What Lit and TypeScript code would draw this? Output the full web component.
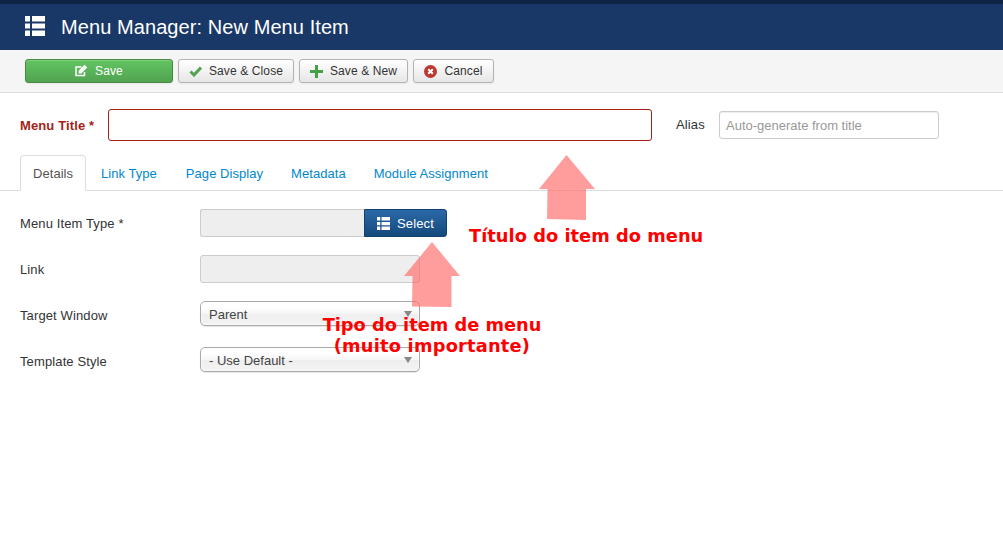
import { LitElement, html, css, svg } from "lit";
import { customElement } from "lit/decorators.js";

const listIcon = (size: number) => html`<svg width=${size} height=${size} viewBox="0 0 20 20" fill="currentColor"><path d="M0 0h5v5.500H0zM7 0h13v5.500H7zM0 7.500h5v5H0zM7 7.500h13v5H7zM0 14.500h5v5.500H0zM7 14.500h13v5.500H7z"/></svg>`;

@customElement("app-root")
export class AppRoot extends LitElement {
  static styles = css`
    :host { display: block; width: 1003px; height: 536px; position: relative; overflow: hidden; background: #fff;
      font-family: "Liberation Sans", Arial, sans-serif; font-size: 13px; color: #333; letter-spacing: .12px; }
    .topbar { height: 4px; background: #0f2344; }
    .header { height: 46px; background: #1a3867; display: flex; align-items: center; padding-left: 25px; gap: 16px; color: #fff; }
    .header h1 { margin: 0; font-size: 20px; font-weight: 400; line-height: 46px; letter-spacing: .08px; }
    .header svg { margin-top: -3px; }
    .toolbar { height: 43px; box-sizing: border-box; background: #f5f5f5; border-bottom: 1px solid #ddd; display: flex; gap: 5px; padding: 9px 0 0 25px; }
    .btn { height: 24px; box-sizing: border-box; border: 1px solid #b3b3b3; border-radius: 3px; background: linear-gradient(#fff, #e6e6e6); display: flex; align-items: center; justify-content: center; gap: 7px; font-size: 12px; color: #333; box-shadow: inset 0 1px 0 rgba(255,255,255,.2), 0 1px 2px rgba(0,0,0,.05); }
    .b-save { width: 148px; background: linear-gradient(#62c462, #51a351); border-color: #46893f; color: #fff; gap: 8px; }
    .b-close { width: 116px; }
    .b-new { width: 109px; }
    .b-cancel { width: 81px; }
    .title-row { display: flex; align-items: center; height: 32px; margin-top: 16px; padding-left: 20px; }
    .title-label { width: 88px; font-weight: 700; color: #a51f18; }
    .title-input { width: 544px; height: 32px; box-sizing: border-box; border: 1px solid #a51f18; border-radius: 3px; background: #fff; }
    .alias-label { margin-left: 24px; width: 43px; margin-top: -1px; }
    .alias-input { width: 220px; height: 28px; box-sizing: border-box; border: 1px solid #ccc; border-radius: 3px; color: #999; font-size: 13px; letter-spacing: 0; padding: 1px 0 0 6px; display: flex; align-items: center; box-shadow: inset 0 1px 1px rgba(0,0,0,.075); }
    .tabs { display: flex; height: 36px; box-sizing: border-box; margin-top: 14px; padding-left: 20px; border-bottom: 1px solid #ddd; letter-spacing: .05px; }
    .tab { height: 36px; box-sizing: border-box; line-height: 37px; color: #08c; font-size: 13px; padding: 0 14px; }
    .tab.active { color: #555; background: #fff; border: 1px solid #ddd; border-bottom-color: #fff; border-radius: 4px 4px 0 0; padding: 0 12px; line-height: 36px; width: 66px; }
    .tab.first { padding: 0 15px; }
    .fields { display: grid; grid-template-columns: 180px 1fr; grid-auto-rows: 28px; row-gap: 18px; padding: 18px 0 0 20px; align-items: center; }
    .group { display: flex; }
    .ro { height: 28px; box-sizing: border-box; background: #eee; border: 1px solid #ccc; border-radius: 3px; }
    .ro.type { width: 164px; border-radius: 3px 0 0 3px; border-right: 0; }
    .ro.link { width: 220px; }
    .select-btn { width: 83px; height: 28px; box-sizing: border-box; border: 1px solid #124071; border-radius: 0 3px 3px 0; background: linear-gradient(#2a69a8, #15497c); color: #fff; display: flex; align-items: center; justify-content: center; gap: 7px; font-size: 13px; }
    .sel { width: 220px; height: 25px; box-sizing: border-box; border: 1px solid #aaa; border-radius: 5px; background: linear-gradient(#fff 20%, #f6f6f6 50%, #eee 52%, #f4f4f4 100%); display: flex; align-items: center; padding: 2px 0 0 8px; font-size: 13px; letter-spacing: 0; color: #444; position: relative; box-shadow: inset 0 0 3px #fff, 0 1px 1px rgba(0,0,0,.1); margin-top: -3px; }
    .sel::after { content: ""; position: absolute; right: 7px; top: 9px; border-left: 4px solid transparent; border-right: 4px solid transparent; border-top: 6px solid #888; }
    .arrow { position: absolute; }
    .note { position: absolute; font-family: "DejaVu Sans", sans-serif; font-weight: 700; font-size: 17.800px; letter-spacing: 0; line-height: 21px; color: #ff0000; text-align: center; white-space: nowrap; }
    .n1 { left: 469px; top: 225px; letter-spacing: .04px; }
    .n2 { left: 322px; top: 314px; width: 220px; }
    .wide { letter-spacing: .22px; }
  `;

  render() {
    return html`
      <div class="topbar"></div>
      <div class="header">${listIcon(20)}<h1>Menu Manager: New Menu Item</h1></div>
      <div class="toolbar">
        <div class="btn b-save">
          <svg width="12" height="12" viewBox="0 0 12 12" fill="none" stroke="#fff"><path stroke-width="1.500" d="M9.500 7v3.500H1V2h5.500"/><path stroke-width="1.800" d="M4.500 7.500v-1.500L9.500 1l1.500 1.500-5 5z"/></svg>
          <span>Save</span>
        </div>
        <div class="btn b-close">
          <svg width="13" height="11" viewBox="0 0 13 11" fill="none" stroke="#51a351" stroke-width="3"><path d="M1.500 5.500l3.500 3.500 7-7.500"/></svg>
          <span>Save &amp; Close</span>
        </div>
        <div class="btn b-new">
          <svg width="13" height="13" viewBox="0 0 13 13" fill="#46a046"><path d="M5 0h3v5h5v3H8v5H5V8H0V5h5z"/></svg>
          <span>Save &amp; New</span>
        </div>
        <div class="btn b-cancel">
          <svg width="13" height="13" viewBox="0 0 13 13"><circle cx="6.500" cy="6.500" r="6.500" fill="#bd362f"/><path d="M4.200 4.200l4.600 4.600M8.800 4.200l-4.600 4.600" stroke="#fff" stroke-width="2"/></svg>
          <span>Cancel</span>
        </div>
      </div>
      <div class="title-row">
        <div class="title-label">Menu Title *</div>
        <div class="title-input"></div>
        <div class="alias-label">Alias</div>
        <div class="alias-input">Auto-generate from title</div>
      </div>
      <div class="tabs">
        <div class="tab active">Details</div>
        <div class="tab first">Link Type</div>
        <div class="tab">Page Display</div>
        <div class="tab">Metadata</div>
        <div class="tab">Module Assignment</div>
      </div>
      <div class="fields">
        <div>Menu Item Type *</div>
        <div class="group"><div class="ro type"></div><div class="select-btn">${listIcon(13)}<span>Select</span></div></div>
        <div>Link</div>
        <div class="ro link"></div>
        <div>Target Window</div>
        <div class="sel">Parent</div>
        <div>Template Style</div>
        <div class="sel">- Use Default -</div>
      </div>
      <svg class="arrow" style="left:400px;top:150px" width="200" height="160" viewBox="400 150 200 160" fill="#ff6b6b" fill-opacity=".66">
        ${svg`<path d="M566.500 155L595 189H586L586 220L547 219L547.500 189H539z"/>
        <path d="M432 242L460 276H451.500L451.500 307L412 306.500L412.500 276H404z"/>`}
      </svg>
      <div class="note n1">Título do item do menu</div>
      <div class="note n2">Tipo do item de menu<br /><span class="wide">(muito importante)</span></div>
    `;
  }
}
